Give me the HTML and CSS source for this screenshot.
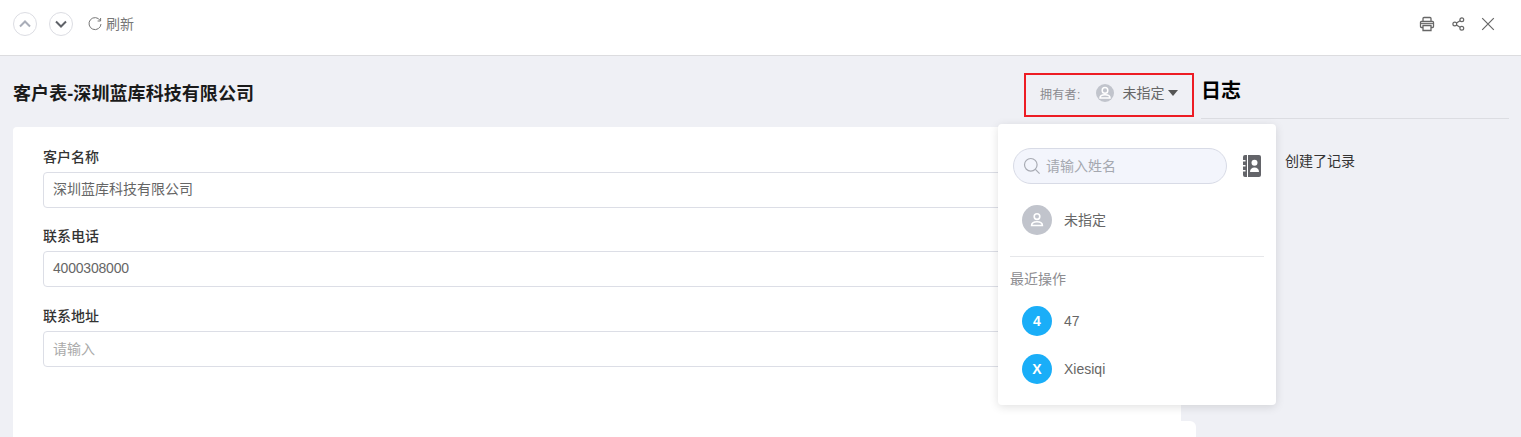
FILE: index.html
```html
<!DOCTYPE html>
<html>
<head>
	<title>客户表</title>
	<meta charset="utf-8" />
	<link rel="stylesheet" href="styles.css">
</head>
<body>

<div class="top-bar">
	<div class="top-left">
		<span class="round-btn"><svg width="14" height="14" viewBox="0 0 14 14"><path d="M2 9.500L7 4.500L12 9.500" fill="none" stroke="#a9adb8" stroke-width="2"/></svg></span>
		<span class="round-btn"><svg width="14" height="14" viewBox="0 0 14 14"><path d="M2 4.500L7 9.500L12 4.500" fill="none" stroke="#5f6268" stroke-width="2"/></svg></span>
		<span class="refresh">
			<svg width="14" height="14" viewBox="0 0 14 14"><path d="M12.200 3.600A6 6 0 1 0 13 7" fill="none" stroke="#777" stroke-width="1"/><path d="M12.600 1v3h-3" fill="none" stroke="#777" stroke-width="1"/></svg>
			<span class="refresh-text">刷新</span>
		</span>
	</div>
	<div class="top-right">
		<svg width="16" height="16" viewBox="0 0 16 16"><path d="M4 5V2.500a1 1 0 0 1 1-1h6a1 1 0 0 1 1 1V5M3.500 11.500H2.500a1 1 0 0 1-1-1v-4a1 1 0 0 1 1-1h11a1 1 0 0 1 1 1v4a1 1 0 0 1-1 1h-1M4 9.500h8v5H4z" fill="none" stroke="#666" stroke-width="1.300"/><path d="M2 7.600h12" stroke="#666" stroke-width="1"/></svg>
		<svg width="14" height="14" viewBox="0 0 14 14"><circle cx="3.800" cy="7" r="1.900" fill="none" stroke="#666" stroke-width="1.200"/><circle cx="10.800" cy="2.800" r="1.900" fill="none" stroke="#666" stroke-width="1.200"/><circle cx="10.800" cy="11.200" r="1.900" fill="none" stroke="#666" stroke-width="1.200"/><path d="M5.400 6L9.100 3.700M5.400 8L9.100 10.300" stroke="#666" stroke-width="1.200"/></svg>
		<svg width="14" height="14" viewBox="0 0 14 14"><path d="M1.200 1.200l11.600 11.600M12.800 1.200L1.200 12.800" stroke="#666" stroke-width="1.200"/></svg>
	</div>
</div>

<div class="main">
	<div class="left-col">
		<div class="title-row">
			<h1 class="page-title">客户表-深圳蓝库科技有限公司</h1>
			<div class="owner">
				<span class="owner-label">拥有者:</span>
				<span class="avatar-small"><svg width="18" height="18" viewBox="0 0 18 18"><circle cx="9" cy="6.400" r="2.800" fill="none" stroke="#fff" stroke-width="1.500"/><path d="M4 14c0-2.200 2-3.200 5-3.200s5 1 5 3.200z" fill="none" stroke="#fff" stroke-width="1.500"/></svg></span>
				<span class="owner-name">未指定</span>
				<span class="caret"></span>
			</div>
		</div>
		<div class="card-wrap">
			<div class="card">
				<div class="field">
					<label class="field-label">客户名称</label>
					<div class="field-input">深圳蓝库科技有限公司</div>
				</div>
				<div class="field">
					<label class="field-label">联系电话</label>
					<div class="field-input phone">4000308000</div>
				</div>
				<div class="field">
					<label class="field-label">联系地址</label>
					<div class="field-input placeholder">请输入</div>
				</div>
			</div>
			<div class="side-tab"></div>
		</div>
	</div>
	<div class="log-col">
		<h2 class="log-title">日志</h2>
		<div class="log-item">创建了记录</div>
	</div>

	<div class="owner-menu">
		<div class="search-row">
			<div class="search-box">
				<svg width="18" height="18" viewBox="0 0 18 18"><circle cx="7.800" cy="7.800" r="6.300" fill="none" stroke="#a8abb3" stroke-width="1.200"/><path d="M12.400 12.400L16.600 16.600" stroke="#a8abb3" stroke-width="1.200"/></svg>
				<span class="search-text">请输入姓名</span>
			</div>
			<svg class="book" width="18" height="22" viewBox="0 0 18 22"><path d="M4 0H2a2 2 0 0 0-2 2v3h2.500v1.500H0V10h2.500v1.500H0V15h2.500v1.500H0V20a2 2 0 0 0 2 2h2z" fill="#636469"/><path d="M5 0h11a2 2 0 0 1 2 2v18a2 2 0 0 1-2 2H5z" fill="#636469"/><circle cx="11.500" cy="7.800" r="3" fill="#fff"/><path d="M7 17c0-3 1.800-4.500 4.500-4.500S16 14 16 17z" fill="#fff"/></svg>
		</div>
		<div class="menu-item none">
			<span class="avatar grey"><svg width="18" height="18" viewBox="0 0 18 18"><circle cx="9" cy="5.600" r="2.800" fill="none" stroke="#fff" stroke-width="1.600"/><path d="M3.600 14.500c0-2.500 2-3.800 5.400-3.800s5.400 1.300 5.400 3.800z" fill="none" stroke="#fff" stroke-width="1.600"/></svg></span>
			<span class="item-text">未指定</span>
		</div>
		<div class="menu-divider"></div>
		<div class="menu-head">最近操作</div>
		<div class="menu-item">
			<span class="avatar">4</span>
			<span>47</span>
		</div>
		<div class="menu-item">
			<span class="avatar">X</span>
			<span>Xiesiqi</span>
		</div>
	</div>
</div>

</body>
</html>
```

FILE: styles.css
```css
html { height:100%; }
body { height:100%; overflow:hidden; margin:0; padding:0; font-family:"Liberation Sans", "Noto Sans CJK SC", sans-serif; font-size:14px; color:#333; background-color:#eff0f5; }

.top-bar {
	height:55px;
	display:flex;
	justify-content:space-between;
	align-items:center;
	padding:0 26px 0 13px;
	background:#fff;
	border-bottom:1px solid #dcdcdf;
}
.top-left { display:flex; align-items:center; margin-bottom:7px; }
.top-right { display:flex; align-items:center; gap:16px; margin-bottom:7px; }
.round-btn {
	width:24px;
	height:24px;
	margin-right:12px;
	box-sizing:border-box;
	display:flex;
	align-items:center;
	justify-content:center;
	border:1px solid #dcdde3;
	border-radius:50%;
}
.refresh { display:flex; align-items:center; gap:4px; margin-left:3px; color:#777; }
.refresh-text { padding-bottom:2px; }

.main { position:relative; display:flex; height:381px; }
.left-col { width:1196px; margin-left:13px; flex-shrink:0; display:flex; flex-direction:column; }
.title-row { height:71px; flex-shrink:0; display:flex; justify-content:space-between; align-items:flex-start; }
.page-title { margin:26px 0 0; font-size:18px; line-height:24px; font-weight:bold; color:#1a1a1a; letter-spacing:0.08px; }
.owner {
	width:170px;
	height:44px;
	margin:17px 15px 0 0;
	box-sizing:border-box;
	border:2px solid #ed1c24;
	display:flex;
	align-items:center;
	padding:0 0 4px 14px;
}
.owner-label { font-size:12px; letter-spacing:0.3px; color:#8a8a8f; margin-right:15px; }
.avatar-small {
	width:18px;
	height:18px;
	border-radius:50%;
	background:#c1c4cc;
	margin-right:8px;
}
.owner-name { font-size:14px; color:#666; padding-bottom:2px; margin-left:1px; }
.caret {
	margin-left:3px;
	border-left:5px solid transparent;
	border-right:5px solid transparent;
	border-top:6px solid #555;
}

.card-wrap { flex:1; min-height:0; display:flex; }
.card {
	width:1168px;
	box-sizing:border-box;
	padding:21px 30px 0;
	background:#fff;
	border-radius:4px 4px 0 0;
}
.side-tab {
	width:15px;
	height:16px;
	align-self:flex-end;
	background:#fff;
	border-radius:0 6px 0 0;
}
.field { margin-bottom:19.400px; }
.field-label { display:block; font-size:14px; line-height:18px; font-weight:500; color:#333; margin-bottom:6px; }
.field-input {
	height:36px;
	box-sizing:border-box;
	border:1px solid #dcdee6;
	border-radius:4px;
	padding-left:9px;
	line-height:33px;
	font-size:14px;
	color:#666;
}
.phone { letter-spacing:-0.2px; }
.placeholder { color:#aaa; line-height:34px; }

.log-col { flex:1; margin:0 12px 0 -8px; }
.log-title {
	margin:0;
	height:63px;
	box-sizing:border-box;
	padding-top:21px;
	font-size:20px;
	line-height:28px;
	font-weight:bold;
	color:#000;
	border-bottom:1px solid #dcdde2;
}
.log-item { padding:33px 0 0 84px; font-size:14px; line-height:18px; color:#333; }

.owner-menu {
	position:absolute;
	left:998px;
	top:68px;
	width:278px;
	height:281px;
	box-sizing:border-box;
	padding:24px 12px 0;
	background:#fff;
	border-radius:4px;
	box-shadow:0 2px 10px rgba(0,0,0,0.12);
}
.search-row { display:flex; align-items:center; padding-left:3px; gap:16px; }
.search-box {
	width:214px;
	height:36px;
	box-sizing:border-box;
	display:flex;
	align-items:center;
	gap:5px;
	padding-left:9px;
	background:#f3f5fc;
	border:1px solid #d8dbe6;
	border-radius:18px;
	font-size:14px;
	color:#a5a8b0;
}
.search-text { padding-bottom:2px; }
.menu-item { height:48px; display:flex; align-items:center; gap:12px; padding-left:12px; font-size:14px; color:#666; }
.menu-item.none { margin-top:12px; }
.item-text { padding-bottom:2px; }
.avatar {
	width:30px;
	height:30px;
	border-radius:50%;
	display:flex;
	align-items:center;
	justify-content:center;
	background:#1aaef8;
	color:#fff;
	font-size:14px;
	font-weight:bold;
}
.avatar.grey { background:#c1c4cc; }
.menu-divider { height:1px; background:#e6e7ea; margin-top:12px; }
.menu-head { margin:13px 0 9px; font-size:14px; line-height:18px; color:#8c8c90; }
```
